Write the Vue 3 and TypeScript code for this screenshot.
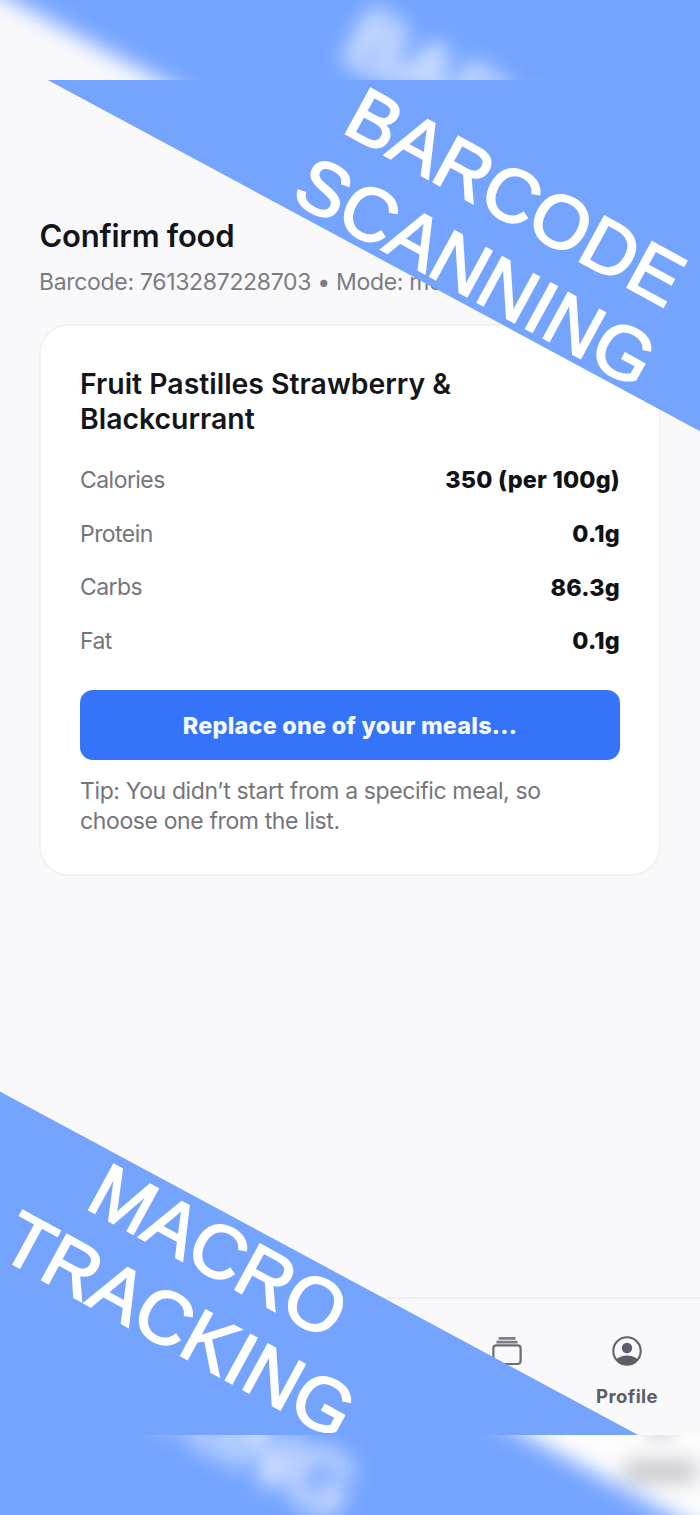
<script setup lang="ts">
interface Nutrient {
  label: string
  value: string
}

interface Line {
  text: string
  x: number
  y: number
  glow: boolean
}

interface Ribbon {
  points: string
  lines: Line[]
}

const nutrients: Nutrient[] = [
  { label: 'Calories', value: '350 (per 100g)' },
  { label: 'Protein', value: '0.1g' },
  { label: 'Carbs', value: '86.3g' },
  { label: 'Fat', value: '0.1g' },
]

// glow: the line reaches into a letterbox band and shows up in the backdrop
const ribbons: Ribbon[] = [
  {
    points: '-138,-20 886,531.3 886,-20',
    lines: [
      { text: 'BARCODE', x: 503.2, y: 219.8, glow: true },
      { text: 'SCANNING', x: 463.2, y: 294.4, glow: false },
    ],
  },
  {
    points: '-186,991.5 824,1535 -186,1535',
    lines: [
      { text: 'MACRO', x: 206.2, y: 1273.8, glow: false },
      { text: 'TRACKING', x: 166.6, y: 1347.8, glow: true },
    ],
  },
]

const angle = 28.6
</script>

<template>
  <div class="stage">
    <!-- enlarged, blurred copy of the artwork that fills the letterbox bands -->
    <svg class="backdrop" viewBox="0 0 700 1515" aria-hidden="true">
      <defs>
        <filter
          id="soften"
          filterUnits="userSpaceOnUse"
          x="-200"
          y="-100"
          width="1100"
          height="1715"
          color-interpolation-filters="sRGB"
        >
          <feGaussianBlur stdDeviation="9.5" />
        </filter>
      </defs>
      <g filter="url(#soften)" transform="translate(350 757.5) scale(1.118) translate(-350 -757.5)">
        <circle class="smudge" cx="627" cy="1351" r="13" />
        <rect class="smudge" x="596" y="1388" width="64" height="16" />
        <g v-for="(ribbon, i) in ribbons" :key="i">
          <polygon class="ribbon" :points="ribbon.points" />
          <text
            v-for="line in ribbon.lines.filter((l) => l.glow)"
            :key="line.text"
            class="ribbon-text"
            :transform="`translate(${line.x} ${line.y}) rotate(${angle})`"
          >{{ line.text }}</text>
        </g>
      </g>
    </svg>

    <div class="screen">
      <main class="content">
        <h1 class="title">Confirm food</h1>
        <p class="subtitle">Barcode: 7613287228703 • Mode: meal</p>

        <section class="card">
          <h2 class="food">Fruit Pastilles Strawberry &amp;<br />Blackcurrant</h2>
          <dl class="facts">
            <div v-for="n in nutrients" :key="n.label" class="fact">
              <dt>{{ n.label }}</dt>
              <dd>{{ n.value }}</dd>
            </div>
          </dl>
          <button class="action" type="button">Replace one of your meals...</button>
          <p class="tip">Tip: You didn’t start from a specific meal, so<br />choose one from the list.</p>
        </section>
      </main>

      <nav class="tabs">
        <div class="tab">
          <svg class="icon" viewBox="0 0 32 32">
            <path d="M7.6 3.4H24.4M5.4 7.1H26.6" fill="none" stroke="#7d7f86" stroke-width="2.6" />
            <rect x="2.4" y="10.4" width="27.2" height="18.6" rx="3" fill="none" stroke="#6b6c74" stroke-width="2.2" />
          </svg>
        </div>
        <div class="tab">
          <svg class="icon" viewBox="0 0 32 32">
            <clipPath id="disc"><circle cx="16" cy="16" r="13.8" /></clipPath>
            <circle cx="16" cy="16" r="13.7" fill="none" stroke="#62636d" stroke-width="2.1" />
            <circle cx="16" cy="13" r="5.2" fill="#5d5e68" />
            <ellipse cx="16" cy="27.6" rx="11.5" ry="7.2" fill="#5d5e68" clip-path="url(#disc)" />
          </svg>
          <span class="tab-label">Profile</span>
        </div>
      </nav>

      <svg class="overlay" viewBox="0 80 700 1355">
        <g v-for="(ribbon, i) in ribbons" :key="i">
          <polygon class="ribbon" :points="ribbon.points" />
          <text
            v-for="line in ribbon.lines"
            :key="line.text"
            class="ribbon-text"
            :transform="`translate(${line.x} ${line.y}) rotate(${angle})`"
          >{{ line.text }}</text>
        </g>
      </svg>
    </div>
  </div>
</template>

<style>
body {
  background: #f9f9fc;
}
</style>

<style scoped>
.stage {
  position: relative;
  box-sizing: border-box;
  width: 700px;
  height: 1515px;
  padding: 80px 0;
  overflow: hidden;
  background: linear-gradient(#f9f9fc 0 80px, #fdfdfe 80px);
  font-family: Inter, 'Liberation Sans', sans-serif;
}

.backdrop {
  position: absolute;
  inset: 0;
  width: 700px;
  height: 1515px;
}

.smudge {
  fill: #5d5e68;
  opacity: 0.42;
}

.screen {
  position: relative;
  display: flex;
  flex-direction: column;
  height: 1355px;
  overflow: hidden;
  background: #f9f9fc;
}

.overlay {
  position: absolute;
  inset: 0;
  width: 700px;
  height: 1355px;
}

.ribbon {
  fill: #75a4ff;
}

.ribbon-text {
  fill: #fff;
  stroke: #fff;
  stroke-width: 2px;
  font-family: 'Liberation Sans', Arial, sans-serif;
  font-size: 75px;
  text-anchor: middle;
}

.content {
  flex: 1;
  padding: 136px 39px 0;
}

.title {
  margin: 0;
  font-size: 31px;
  line-height: 39px;
  font-weight: 600;
  letter-spacing: -0.25px;
  text-indent: 0.5px;
  color: #14151b;
}

.subtitle {
  margin: 12px 0 0;
  font-size: 23px;
  line-height: 30px;
  letter-spacing: -0.32px;
  color: #7b7c82;
  white-space: nowrap;
}

.card {
  box-sizing: border-box;
  height: 552px;
  margin-top: 27px;
  padding: 40px 39px 0;
  border: 2px solid #f2f2f3;
  border-radius: 30px;
  background: #fff;
}

.food {
  margin: 0;
  font-size: 28.4px;
  line-height: 35px;
  font-weight: 600;
  color: #14151b;
  white-space: nowrap;
}

.facts {
  display: grid;
  grid-auto-rows: 53.7px;
  margin: 17px 0 0;
}

.fact {
  display: flex;
  align-items: center;
  justify-content: space-between;
}

.fact dt {
  font-size: 23px;
  letter-spacing: -0.55px;
  color: #74757c;
}

.fact dd {
  margin: 0;
  font-size: 23.4px;
  font-weight: 800;
  letter-spacing: 0.2px;
  color: #111217;
}

.action {
  display: block;
  width: 100%;
  height: 70px;
  margin: 22px 0 0;
  padding: 1px 0 0;
  border: 0;
  border-radius: 13px;
  background: #3574f8;
  color: #f4faff;
  font-family: inherit;
  font-size: 23.4px;
  font-weight: 800;
  letter-spacing: 0.22px;
}

.tip {
  margin: 17.5px 0 0;
  font-size: 23px;
  line-height: 29.5px;
  letter-spacing: -0.38px;
  color: #74757c;
  white-space: nowrap;
}

.tabs {
  box-sizing: border-box;
  display: flex;
  justify-content: flex-end;
  height: 138px;
  padding: 36px 13px 0 0;
  border-top: 2px solid #eeeef0;
}

.tab {
  display: flex;
  flex-direction: column;
  align-items: center;
  width: 120px;
}

.icon {
  width: 32px;
  height: 32px;
}

.tab-label {
  margin-top: 16px;
  font-size: 18.5px;
  line-height: 26px;
  font-weight: 700;
  letter-spacing: 0.4px;
  color: #5d5e68;
}
</style>
